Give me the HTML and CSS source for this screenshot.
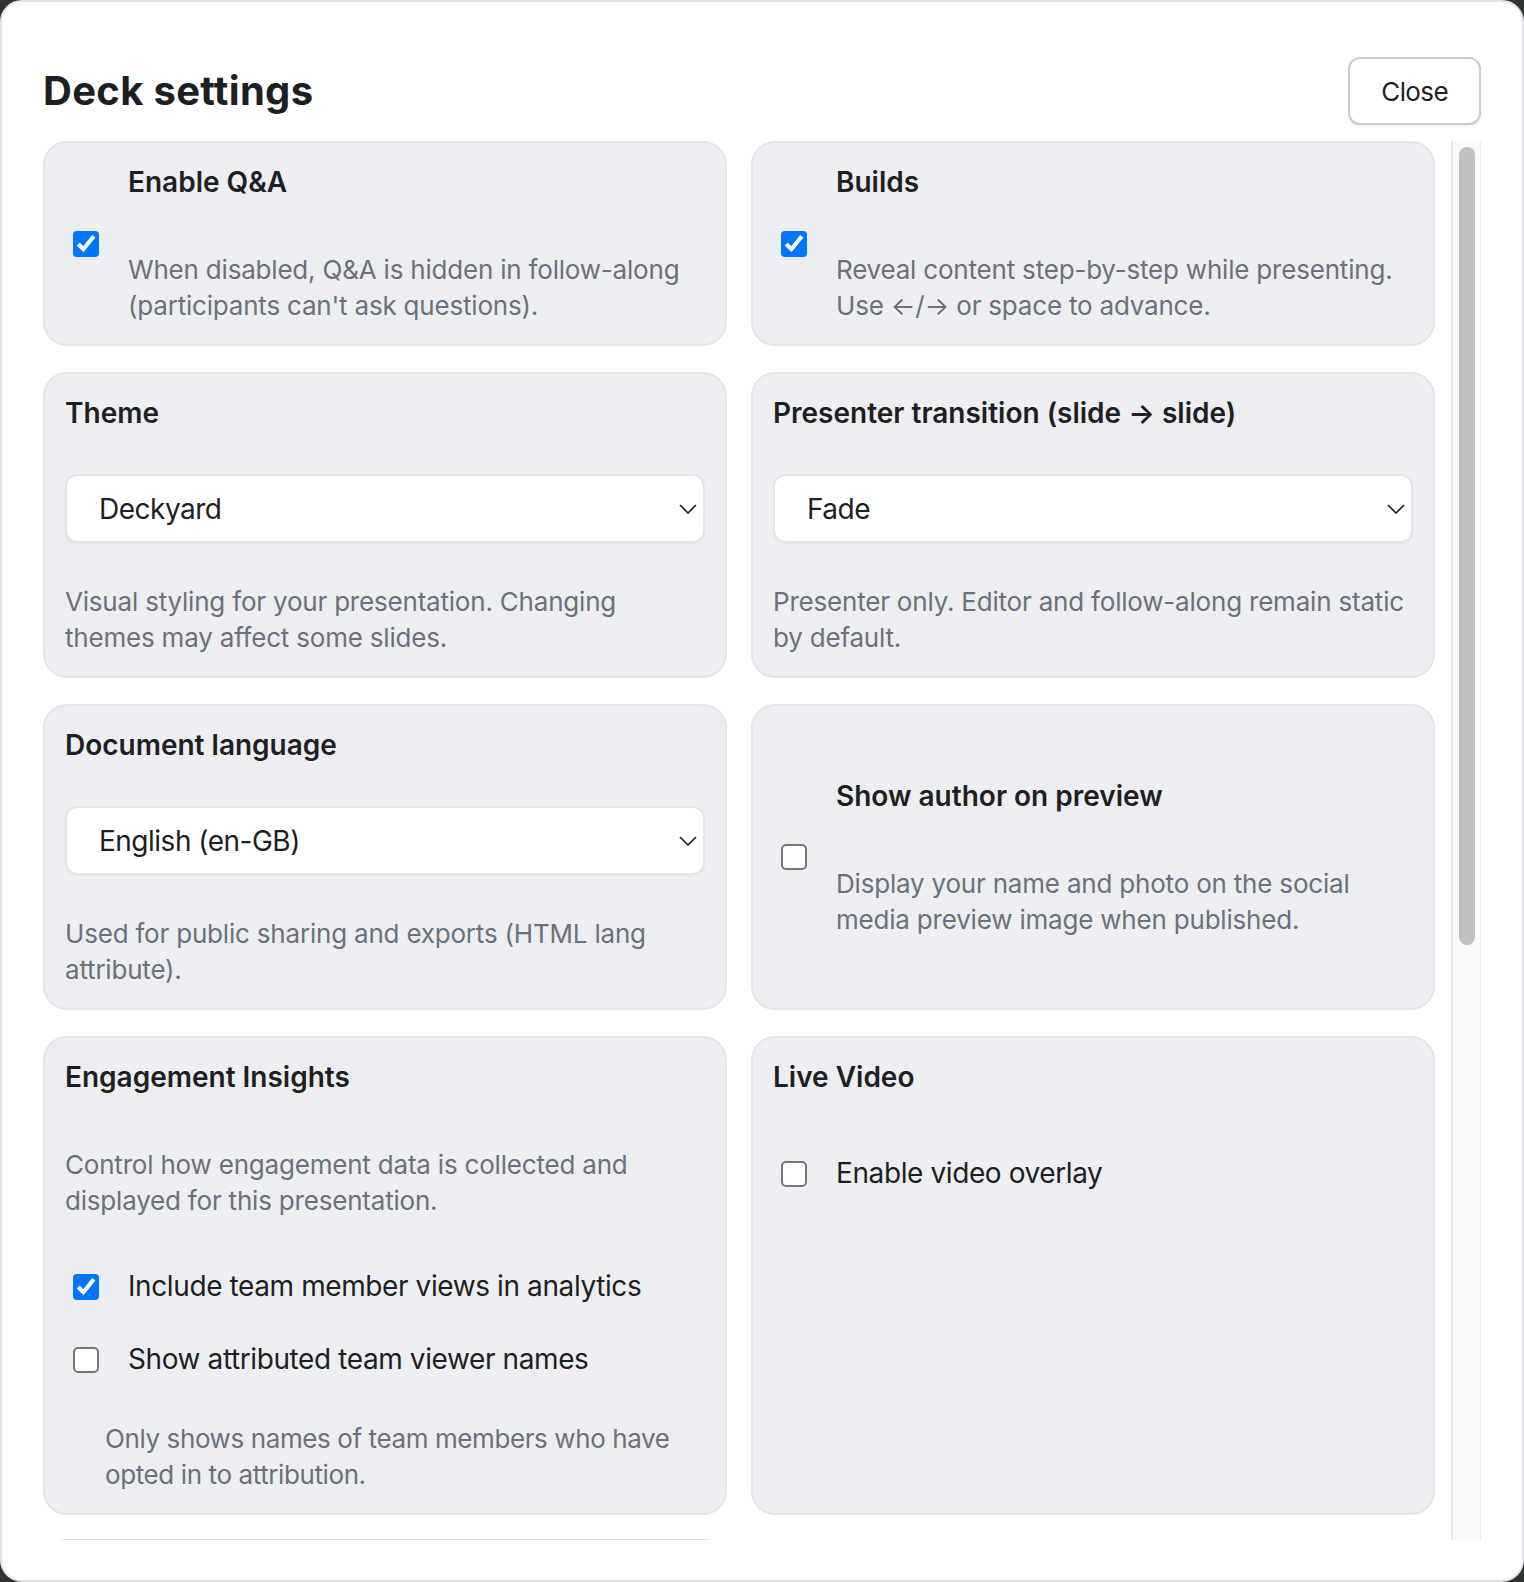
FILE: index.html
```html
<!DOCTYPE html>
<html lang="en">

<head>
    <meta charset="UTF-8">
    <meta name="viewport" content="width=device-width, initial-scale=1.0">
    <title>Deck settings</title>
    <link rel="stylesheet" href="styles.css">
</head>

<body>
    <div class="modal">
        <header class="modal-head">
            <h1>Deck settings</h1>
            <button class="btn">Close</button>
        </header>

        <div class="modal-body">
            <div class="scroll-view">
                <div class="settings-grid">
                    <!-- row 1 -->
                    <label class="card toggle-card">
                        <input type="checkbox" class="check" checked>
                        <div class="toggle-text">
                            <div class="card-title">Enable Q&amp;A</div>
                            <p class="toggle-desc">When disabled, Q&amp;A is hidden in follow-along (participants can't ask questions).</p>
                        </div>
                    </label>
                    <label class="card toggle-card">
                        <input type="checkbox" class="check" checked>
                        <div class="toggle-text">
                            <div class="card-title">Builds</div>
                            <p class="toggle-desc">Reveal content step-by-step while presenting. Use ←/→ or space to advance.</p>
                        </div>
                    </label>

                    <!-- row 2 -->
                    <div class="card field-card">
                        <div class="card-title">Theme</div>
                        <div class="select-wrap">
                            <select class="select">
                                <option>Deckyard</option>
                            </select>
                            <svg class="chevron" width="18" height="10" viewBox="0 0 18 10"><path d="M1 1l8 8 8-8" fill="none" stroke="#222" stroke-width="1.7"/></svg>
                        </div>
                        <p class="desc">Visual styling for your presentation. Changing themes may affect some slides.</p>
                    </div>
                    <div class="card field-card">
                        <div class="card-title">Presenter transition (slide → slide)</div>
                        <div class="select-wrap">
                            <select class="select">
                                <option>Fade</option>
                            </select>
                            <svg class="chevron" width="18" height="10" viewBox="0 0 18 10"><path d="M1 1l8 8 8-8" fill="none" stroke="#222" stroke-width="1.7"/></svg>
                        </div>
                        <p class="desc">Presenter only. Editor and follow-along remain static by default.</p>
                    </div>

                    <!-- row 3 -->
                    <div class="card field-card">
                        <div class="card-title">Document language</div>
                        <div class="select-wrap">
                            <select class="select">
                                <option>English (en-GB)</option>
                            </select>
                            <svg class="chevron" width="18" height="10" viewBox="0 0 18 10"><path d="M1 1l8 8 8-8" fill="none" stroke="#222" stroke-width="1.7"/></svg>
                        </div>
                        <p class="desc">Used for public sharing and exports (HTML lang attribute).</p>
                    </div>
                    <label class="card toggle-card">
                        <input type="checkbox" class="check">
                        <div class="toggle-text">
                            <div class="card-title">Show author on preview</div>
                            <p class="toggle-desc">Display your name and photo on the social media preview image when published.</p>
                        </div>
                    </label>

                    <!-- row 4 -->
                    <div class="card">
                        <div class="card-title">Engagement Insights</div>
                        <p class="desc insights-desc">Control how engagement data is collected and displayed for this presentation.</p>
                        <label class="check-row first-row">
                            <input type="checkbox" class="check" checked>
                            <span>Include team member views in analytics</span>
                        </label>
                        <label class="check-row next-row">
                            <input type="checkbox" class="check">
                            <span>Show attributed team viewer names</span>
                        </label>
                        <p class="desc hint">Only shows names of team members who have opted in to attribution.</p>
                    </div>
                    <div class="card">
                        <div class="card-title">Live Video</div>
                        <label class="check-row video-row">
                            <input type="checkbox" class="check">
                            <span>Enable video overlay</span>
                        </label>
                    </div>

                    <!-- next row, scrolled out of view -->
                    <div class="card next-card"></div>
                </div>
            </div>

            <div class="scrollbar">
                <div class="scroll-thumb"></div>
            </div>
        </div>
    </div>
</body>

</html>
```

FILE: styles.css
```css
html,
body {
    margin: 0;
    height: 100%;
    overflow: hidden;
}

body {
    font-family: Inter, "Liberation Sans", sans-serif;
    color: #1d1f23;
    background: #2f3431;
}

.modal {
    box-sizing: border-box;
    height: 100vh;
    display: flex;
    flex-direction: column;
    background: white;
    border: 2px solid #e2e3e6;
    border-radius: 22px;
    padding: 0 41px 40px;
}

.modal-head {
    display: flex;
    justify-content: space-between;
    align-items: center;
    padding: 55px 0 16px;
}

.modal-head h1 {
    margin: 0;
    font-size: 40px;
    font-weight: 700;
    letter-spacing: 0.3px;
    line-height: 48px;
}

.btn {
    height: 68px;
    padding: 0 31px;
    background: white;
    color: #1d1f23;
    border: 2px solid #c9ccd3;
    border-radius: 12px;
    box-shadow: 0 2px 2px rgba(0, 0, 0, 0.05);
    font-family: inherit;
    font-size: 26px;
    letter-spacing: -0.6px;
    cursor: pointer;
}

.modal-body {
    flex: 1;
    min-height: 0;
    display: flex;
}

.scroll-view {
    flex: 1;
    overflow: hidden;
}

.scrollbar {
    box-sizing: border-box;
    width: 30px;
    padding: 6px 5px 0 6px;
    background: #fafafa;
    border-left: 2px solid #e8e8e8;
    border-right: 1px solid #efefef;
}

.scroll-thumb {
    width: 16px;
    height: 798px;
    background: #c1c1c1;
    border-radius: 8px;
}

.settings-grid {
    display: grid;
    grid-template-columns: 684px 684px;
    gap: 26px 24px;
    padding-right: 16px;
}

.card {
    box-sizing: border-box;
    background: #edeef1;
    border: 2px solid #e3e5e9;
    border-radius: 24px;
    padding: 20px;
}

.next-card {
    height: 300px;
    margin-top: -2px;
    border-color: #dcdee3;
}

.card-title {
    font-size: 28px;
    line-height: 39px;
    font-weight: 600;
    color: #1d1f23;
}

.desc,
.toggle-desc {
    margin: 0;
    font-size: 26px;
    line-height: 36px;
    letter-spacing: -0.2px;
    color: #6b717c;
}

/* checkbox cards */
.toggle-card {
    display: flex;
    align-items: center;
}

.toggle-text {
    margin-left: 23px;
}

.toggle-desc {
    margin-top: 50px;
}

.check {
    zoom: 2;
    flex-shrink: 0;
}

/* select cards */
.field-card .select-wrap {
    position: relative;
    margin: 41px 0;
}

.select {
    appearance: none;
    width: 100%;
    height: 69px;
    padding: 0 32px;
    background: white;
    border: 2px solid #e2e4e8;
    border-radius: 12px;
    box-shadow: 0 1px 2px rgba(0, 0, 0, 0.04);
    font-family: inherit;
    font-size: 28px;
    letter-spacing: -0.5px;
    color: #1d1f23;
}

.chevron {
    position: absolute;
    right: 8px;
    top: 30px;
    pointer-events: none;
}

/* checkbox rows */
.check-row {
    display: flex;
    align-items: center;
    font-size: 28px;
    line-height: 39px;
    letter-spacing: -0.4px;
    color: #1d1f23;
}

.check-row span {
    margin-left: 23px;
}

.insights-desc {
    margin-top: 50px;
}

.first-row {
    margin-top: 48px;
}

.next-row {
    margin-top: 34px;
}

.video-row {
    margin-top: 57px;
}

.hint {
    margin-top: 42px;
    padding-left: 40px;
    letter-spacing: -0.4px;
}
```
